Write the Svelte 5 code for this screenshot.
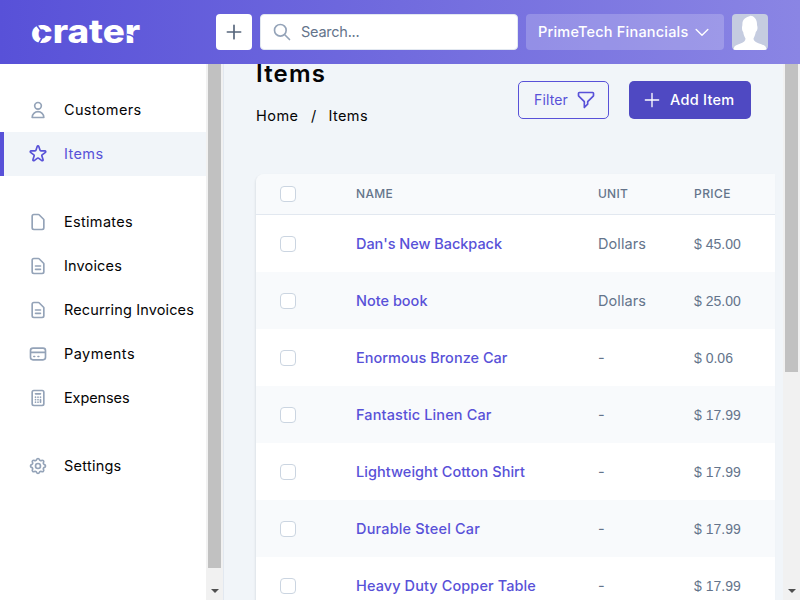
<script>
  const icons = {
    user: 'M16 7a4 4 0 11-8 0 4 4 0 018 0zM12 14a7 7 0 00-7 7h14a7 7 0 00-7-7z',
    star: 'M11.049 2.927c.3-.921 1.603-.921 1.902 0l1.519 4.674a1 1 0 00.95.69h4.915c.969 0 1.371 1.24.588 1.81l-3.976 2.888a1 1 0 00-.363 1.118l1.518 4.674c.3.922-.755 1.688-1.538 1.118l-3.976-2.888a1 1 0 00-1.176 0l-3.976 2.888c-.783.57-1.838-.197-1.538-1.118l1.518-4.674a1 1 0 00-.363-1.118l-3.976-2.888c-.784-.57-.38-1.81.588-1.81h4.914a1 1 0 00.951-.69l1.519-4.674z',
    doc: 'M7 21h10a2 2 0 002-2V9.414a1 1 0 00-.293-.707l-5.414-5.414A1 1 0 0012.586 3H7a2 2 0 00-2 2v14a2 2 0 002 2z',
    docText: 'M9 12h6m-6 4h6m2 5H7a2 2 0 01-2-2V5a2 2 0 012-2h5.586a1 1 0 01.707.293l5.414 5.414a1 1 0 01.293.707V19a2 2 0 01-2 2z',
    card: 'M3 10h18M7 15h1m4 0h1m-7 4h12a3 3 0 003-3V8a3 3 0 00-3-3H6a3 3 0 00-3 3v8a3 3 0 003 3z',
    calc: 'M9 7h6m0 10v-3m-3 3h.01M9 17h.01M9 14h.01M12 14h.01M15 11h.01M12 11h.01M9 11h.01M7 21h10a2 2 0 002-2V5a2 2 0 00-2-2H7a2 2 0 00-2 2v14a2 2 0 002 2z',
    cog: 'M10.325 4.317c.426-1.756 2.924-1.756 3.35 0a1.724 1.724 0 002.573 1.066c1.543-.94 3.31.826 2.37 2.37a1.724 1.724 0 001.065 2.572c1.756.426 1.756 2.924 0 3.35a1.724 1.724 0 00-1.066 2.573c.94 1.543-.826 3.31-2.37 2.37a1.724 1.724 0 00-2.572 1.065c-.426 1.756-2.924 1.756-3.35 0a1.724 1.724 0 00-2.573-1.066c-1.543.94-3.31-.826-2.37-2.37a1.724 1.724 0 00-1.065-2.572c-1.756-.426-1.756-2.924 0-3.35a1.724 1.724 0 001.066-2.573c-.94-1.543.826-3.31 2.37-2.37.996.608 2.296.07 2.572-1.065zM15 12a3 3 0 11-6 0 3 3 0 016 0z',
    search: 'M21 21l-6-6m2-5a7 7 0 11-14 0 7 7 0 0114 0z',
    plus: 'M12 4v16m8-8H4',
    chevron: 'M19 9l-7 7-7-7',
    filter: 'M3 4a1 1 0 011-1h16a1 1 0 011 1v2.586a1 1 0 01-.293.707l-6.414 6.414a1 1 0 00-.293.707V17l-4 4v-6.586a1 1 0 00-.293-.707L3.293 7.293A1 1 0 013 6.586V4z'
  };

  const menu = [
    [
      { label: 'Customers', width: 77.5, icon: 'user' },
      { label: 'Items', width: 39.5, icon: 'star', active: true }
    ],
    [
      { label: 'Estimates', width: 69, icon: 'doc' },
      { label: 'Invoices', width: 58, icon: 'docText' },
      { label: 'Recurring Invoices', width: 130, icon: 'docText' },
      { label: 'Payments', width: 71, icon: 'card' },
      { label: 'Expenses', width: 65.5, icon: 'calc' }
    ],
    [{ label: 'Settings', width: 57.5, icon: 'cog' }]
  ];

  const items = [
    { name: "Dan's New Backpack", width: 146, unit: 'Dollars', price: '$ 45.00' },
    { name: 'Note book', width: 71.5, unit: 'Dollars', price: '$ 25.00' },
    { name: 'Enormous Bronze Car', width: 151.5, unit: '-', price: '$ 0.06' },
    { name: 'Fantastic Linen Car', width: 135.5, unit: '-', price: '$ 17.99' },
    { name: 'Lightweight Cotton Shirt', width: 169, unit: '-', price: '$ 17.99' },
    { name: 'Durable Steel Car', width: 124, unit: '-', price: '$ 17.99' },
    { name: 'Heavy Duty Copper Table', width: 180, unit: '-', price: '$ 17.99' }
  ];

  // Tracks a label so that it fills the given width.
  function fit(node, width) {
    const natural = node.getBoundingClientRect().width;
    node.style.letterSpacing = (width - natural) / node.textContent.length + 'px';
  }
</script>

{#snippet icon(name, weight = 2)}
  <svg class="icon" viewBox="0 0 24 24" fill="none" stroke="currentColor" stroke-width={weight} stroke-linecap="round" stroke-linejoin="round"><path d={icons[name]} /></svg>
{/snippet}

<div class="app">
  <header>
    <svg class="logo" width="112" height="32" viewBox="30 16 112 32" role="img" aria-label="crater">
      <text x="30.800" y="43.3" textLength="109.500" lengthAdjust="spacingAndGlyphs">crater</text>
      <path d="M35.500 23.500l5.500 7.500M42 38l-4.500 7.500" />
      <path d="M127 34.500q4.500 0 7.500 3.500" />
    </svg>
    <div class="tools">
      <button class="create" aria-label="Create">{@render icon('plus')}</button>
      <div class="search">{@render icon('search')}<span use:fit={58.5}>Search...</span></div>
      <button class="company"><span use:fit={150.5}>PrimeTech Financials</span>{@render icon('chevron', 1.7)}</button>
      <svg class="avatar" width="36" height="36" viewBox="0 0 36 36">
        <rect width="36" height="36" fill="#c5cce0" />
        <path fill="#fff" d="M18 2C20 1 25 4 25 10c0 2 .5 2 .5 4s-1 3-1.700 4c-.5 3-1.500 5-2.300 6.500 0 5 9 5 12 8l1.500 3.500H1l1.500-3.500c3-3 11-3 11-8-.8-1.500-2-3.500-2.300-6.500-.7-1-1.200-2-1.200-4s.4-2 .4-4c0-5 4-7 7.600-8z" />
      </svg>
    </div>
  </header>

  <div class="body">
    <aside>
      <nav>
        {#each menu as group}
          <div class="group">
            {#each group as entry}
              <div class="entry" class:active={entry.active}>
                {@render icon(entry.icon)}
                <span use:fit={entry.width}>{entry.label}</span>
              </div>
            {/each}
          </div>
        {/each}
      </nav>
      <div class="scrollbar"><div class="thumb side"></div><i></i></div>
    </aside>

    <main>
      <div class="top">
        <div>
          <h1><span use:fit={70}>Items</span></h1>
          <div class="crumbs"><span use:fit={42.5}>Home</span><b>/</b><span use:fit={39.5}>Items</span></div>
        </div>
        <div class="actions">
          <button class="filter"><span use:fit={34}>Filter</span>{@render icon('filter')}</button>
          <button class="add">{@render icon('plus', 1.6)}<span use:fit={64.5}>Add Item</span></button>
        </div>
      </div>

      <div class="table">
        <div class="row head">
          <div class="pick"><i class="box"></i></div>
          <div class="name"><span use:fit={37}>NAME</span></div>
          <div class="unit"><span use:fit={30}>UNIT</span></div>
          <div class="price"><span use:fit={37}>PRICE</span></div>
        </div>
        {#each items as item}
          <div class="row">
            <div class="pick"><i class="box"></i></div>
            <div class="name"><span use:fit={item.width}>{item.name}</span></div>
            <div class="unit"><span use:fit={item.unit === '-' ? 7 : 48}>{item.unit}</span></div>
            <div class="price">{item.price}</div>
          </div>
        {/each}
      </div>
    </main>
    <div class="scrollbar page"><div class="thumb"></div><i></i></div>
  </div>
</div>

<style>
  :global(body) { margin: 0; overflow: hidden; }
  .app {
    width: 800px; height: 600px; overflow: hidden; display: flex; flex-direction: column;
    font: 14.5px/20px Inter, sans-serif; color: #040405; background: #f1f5f9;
  }
  .app * { box-sizing: border-box; }
  span { display: inline-block; white-space: nowrap; }
  button { border: 0; margin: 0; padding: 0; font: inherit; color: inherit; background: none; }
  .icon { width: 20px; height: 20px; flex: none; display: block; }

  header {
    height: 64px; flex: none; padding: 0 32px 0 30px; display: flex; align-items: center;
    justify-content: space-between; background: linear-gradient(90deg, #5851d8, #8a85e4);
  }
  .logo { display: block; }
  .logo text { font: 800 33px Inter, sans-serif; fill: #fff; }
  .logo path { fill: none; stroke: #5d56d9; stroke-width: 1.6; }
  .tools { display: flex; gap: 8px; }
  .create {
    width: 36px; height: 36px; border-radius: 4px; background: #fff; color: #56657b;
    display: flex; align-items: center; justify-content: center;
  }
  .search {
    width: 258px; height: 36px; border-radius: 4px; border: 1px solid #e2e8f0; background: #fff;
    padding-left: 11px; display: flex; align-items: center; gap: 9px; color: #94a3b8;
  }
  .search span { color: #64748b; }
  .company {
    width: 198px; height: 36px; border-radius: 4px; background: rgb(255 255 255 / .2); color: #fff;
    padding-left: 12px; display: flex; align-items: center; gap: 3.5px; font-weight: 550;
  }
  .avatar { display: block; border-radius: 4px; }

  .body { flex: 1; min-height: 0; display: flex; }
  aside { width: 224px; flex: none; display: flex; background: #fff; border-right: 1px solid #e2e8f0; }
  nav { flex: 1; padding-top: 24px; }
  .group { margin-bottom: 24px; }
  .entry { height: 44px; padding-left: 28px; display: flex; align-items: center; gap: 16px; color: #94a3b8; }
  .entry span { color: #040405; }
  .entry.active { border-left: 4px solid #5851d8; padding-left: 24px; background: #f1f5f9; color: #5851d8; }
  .entry.active span { color: #5851d8; }

  .scrollbar {
    width: 17px; flex: none; display: flex; flex-direction: column; align-items: center;
    justify-content: space-between; background: #f1f1f1; padding-bottom: 7px;
  }
  .thumb { width: 13px; height: 308px; background: #c1c1c1; }
  .thumb.side { height: 504px; }
  .scrollbar i { border: 4px solid transparent; border-top-color: #505050; border-bottom: 0; }

  main { flex: 1; min-width: 0; padding: 0 8px 0 32px; overflow: hidden; }
  .top { height: 110px; display: flex; justify-content: space-between; padding-right: 24px; }
  h1 { margin: -6px 0 0; font-size: 24px; line-height: 32px; font-weight: 600; }
  .crumbs { display: flex; margin-top: 16px; }
  .crumbs b { width: 30px; text-align: center; font-weight: 400; }
  .actions { display: flex; gap: 20px; padding-top: 17px; }
  .filter {
    width: 91px; height: 38px; border: 1px solid #5851d8; border-radius: 5px; color: #5851d8;
    display: flex; align-items: center; padding-left: 15px; gap: 8px; font-size: 14px;
  }
  .add {
    width: 122px; height: 38px; border-radius: 5px; background: #4f49c2; color: #fff;
    display: flex; align-items: center; padding-left: 13px; gap: 8px; font-weight: 550;
  }

  .table { width: 519px; border-radius: 8px 0 0; overflow: hidden; box-shadow: -1px 1px 2px rgb(15 23 42 / .08); }
  .row { height: 57px; padding-left: 24px; display: flex; align-items: center; background: #fff; color: #64748b; }
  .row:nth-child(odd):not(.head) { background: #f8fafc; }
  .row.head { height: 41px; border-bottom: 1px solid #e2e8f0; background: #f8fafc; font-size: 12px; font-weight: 500; }
  .pick { width: 76px; }
  .box { display: block; width: 16px; height: 16px; border: 1px solid #cbd5e1; border-radius: 4px; background: #fff; }
  .name { width: 242px; }
  .row:not(.head) .name { color: #5851d8; font-weight: 450; }
  .unit { width: 96px; }
  .row:not(.head) .price { font-family: "Liberation Sans", sans-serif; font-size: 14px; }
</style>
